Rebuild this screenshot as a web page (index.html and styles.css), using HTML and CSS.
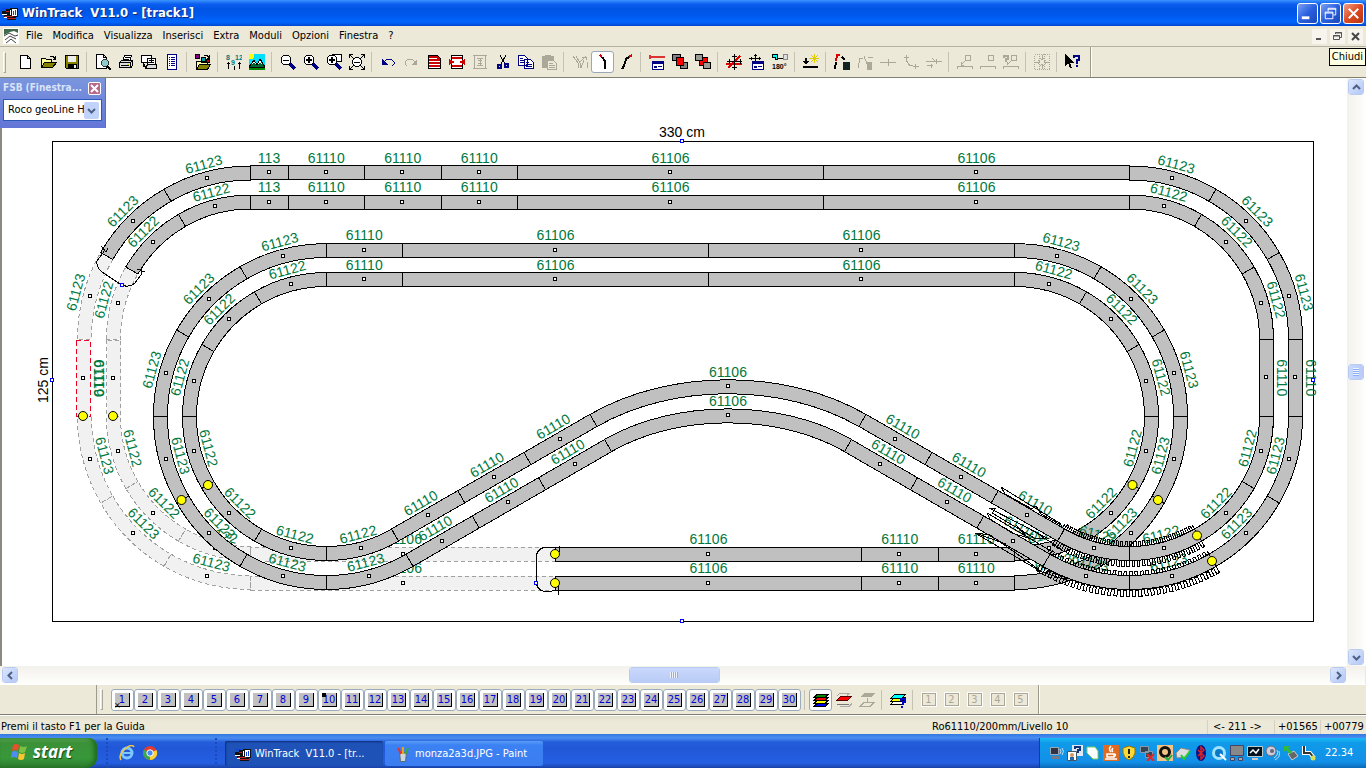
FILE: index.html
```html
<!DOCTYPE html>
<html lang="it">
<head>
    <meta charset="UTF-8">
    <meta name="viewport" content="width=device-width, initial-scale=1.0">
    <title>WinTrack V11.0 - [track1]</title>
    <link rel="stylesheet" href="styles.css">
</head>
<body>
    <svg class="defs" width="0" height="0">
        <symbol id="app" viewBox="0 0 16 16">
            <path fill="#111" d="M0 6h4V4h4V3h8v9h-2v3H5v-2H2v-3H0z"/>
            <path fill="#fff" d="M0 9h5v1H0zM8 5h1v5H8zM10 4h5v7h-5zM2 12h3v1H2z"/>
            <path fill="#1040e0" d="M11 6h1v4h-1zM13 5h1v5h-1zM0 3h6v1H0z"/>
            <path fill="#c02020" d="M3 11h8v1H3zM5 13h9v1H5zM4 6h3v1H4z"/>
        </symbol>
        <symbol id="page" viewBox="0 0 16 16"><path fill="#fff" stroke="#000" d="M2.500 1.500h7l3 3v10h-10zM9.500 1.500v3h3"/></symbol>
        <symbol id="folder" viewBox="0 0 16 16">
            <path fill="#ffff9c" stroke="#000" d="M.5 13.500v-9h4l1 1h5v3"/>
            <path fill="#848200" stroke="#000" d="M.5 13.500l3-5h12l-4 5z"/>
            <path fill="none" stroke="#000" d="M9 2.500h3l2 2M14.500 2v3h-3"/>
        </symbol>
        <symbol id="lens" viewBox="0 0 16 16">
            <path stroke="#000084" stroke-width="3" d="M10 10l5 5"/>
            <circle cx="6" cy="6" r="5" fill="#fff" stroke="#000"/>
        </symbol>
        <symbol id="win" viewBox="0 0 16 16"><path fill="#fff" stroke="#000084" d="M3.500 7.500h11v8h-11z"/><path fill="#000084" d="M4 8h10v2H4zM5 12h3v2H5zM9 12h4v1H9z"/></symbol>
        <symbol id="paint" viewBox="0 0 16 16">
            <path fill="#cdd6dd" stroke="#596a75" d="M4.500 6.500h7l-1 9h-5z"/>
            <path stroke="#d33" stroke-width="2" d="M6 8L3 2"/><path stroke="#f0a020" stroke-width="2" d="M8 8V1"/><path stroke="#3a3" stroke-width="2" d="M10 8l3-6"/>
        </symbol>
    </svg>

    <header class="title-bar">
        <svg class="icon"><use href="#app"/></svg>
        <h1>WinTrack&nbsp; V11.0 - [track1]</h1>
        <div class="window-buttons">
            <button aria-label="Riduci a icona"><svg viewBox="0 0 20 20"><path fill="#fff" d="M4 13h8v3H4z"/></svg></button>
            <button aria-label="Ripristina"><svg viewBox="0 0 20 20"><path fill="none" stroke="#fff" d="M7.500 8V4.500h8v7H13M7 5.500h9M4.500 8.500h8v7h-8zM4 9.500h9"/></svg></button>
            <button class="close" aria-label="Chiudi"><svg viewBox="0 0 20 20"><path stroke="#fff" stroke-width="2" d="M5 5l10 10M15 5L5 15"/></svg></button>
        </div>
    </header>

    <nav class="menu-bar">
        <svg class="icon" viewBox="0 0 16 16"><path fill="#fff" d="M0 0h16v16H0z"/><path fill="#3f6b4c" d="M1 1h14v4l-4-2-4 1-6 3z"/><path fill="none" stroke="#444" d="M1 8l5-3 6 3 3-1M2 12l5-4 6 3M3 15l5-4 5 4"/></svg>
        <button>File</button>
        <button>Modifica</button>
        <button>Visualizza</button>
        <button>Inserisci</button>
        <button>Extra</button>
        <button>Moduli</button>
        <button>Opzioni</button>
        <button>Finestra</button>
        <button>?</button>
        <div class="child-buttons">
            <button aria-label="Riduci"><svg viewBox="0 0 15 15"><path fill="#555" d="M4 9h5v2H4z"/></svg></button>
            <button aria-label="Ripristina finestra"><svg viewBox="0 0 15 15"><path fill="none" stroke="#555" d="M5.500 5V3.500h6v5H10M5 4h7M3.500 6.500h6v4h-6zM3 7h7"/></svg></button>
            <button aria-label="Chiudi finestra"><svg viewBox="0 0 15 15"><path stroke="#444" stroke-width="2" d="M4 4l7 7M11 4l-7 7"/></svg></button>
        </div>
        <span class="tooltip" role="tooltip">Chiudi</span>
    </nav>

    <div class="toolbar main-tools">
        <span class="grip"></span>
        <button aria-label="Nuovo"><svg><use href="#page"/></svg></button>
        <button aria-label="Apri"><svg><use href="#folder"/></svg></button>
        <button aria-label="Salva"><svg viewBox="0 0 16 16"><path fill="#848200" stroke="#000" d="M1.500 1.500h13v13h-12l-1-1z"/><path fill="#eee" d="M4 2h8v6H4z"/><path d="M4 10h9v5H4z"/><path fill="#eee" d="M10 11h2v3h-2z"/></svg></button>
        <i></i>
        <button aria-label="Anteprima"><svg viewBox="0 0 16 16"><path fill="#fff" stroke="#000" d="M1.500.5h7l3 3v11h-10zM8.500.5v3h3"/><circle cx="10" cy="9" r="3.500" fill="#8cc" stroke="#333"/><path stroke="#000" stroke-width="2" d="M12 12l4 4"/></svg></button>
        <button aria-label="Stampa"><svg viewBox="0 0 16 16"><path fill="#fff" stroke="#000" d="M4.500 7.500l2-6h7l-2 6z"/><path fill="#ddd" stroke="#000" d="M1.500 8.500l2-2h11l-2 2zM1.500 8.500h11v5h-11zM12.500 8.500l2-2v5l-2 3"/><path stroke="#000" d="M7 3.500h5M6 5.500h5M3 11.500h8"/><path fill="#dd0" d="M9 10h2v1H9z"/></svg></button>
        <button aria-label="Finestre"><svg viewBox="0 0 16 16"><path fill="#fff" stroke="#000" d="M.5 1.500h10v7H.5zM6.500 4.500h8v6h-8z"/><path fill="#ddd" stroke="#000" d="M4.500 14.500l2-4h9v4z"/><path stroke="#000" d="M2.500 9v3.500H5M8 6.500h5M8 8.500h5"/></svg></button>
        <button aria-label="Elenco"><svg viewBox="0 0 16 16"><path fill="#fff" stroke="#000084" d="M3.500.5h9v15h-9z"/><path stroke="#000084" d="M5 3.500h1M7 3.500h4M5 5.500h1M7 5.500h4M5 7.500h1M7 7.500h4M5 9.500h1M7 9.500h4M5 11.500h1M7 11.500h4"/></svg></button>
        <i></i>
        <button aria-label="Biblioteca"><svg viewBox="0 0 16 16"><path fill="#840084" stroke="#000" d="M.5.5h4v4h-4z"/><path fill="#00a0a0" stroke="#000" d="M6.500 3.500h4v4h-4z"/><path fill="#c00" stroke="#000" d="M11.500 5.500h3v3h-3z"/><path fill="#ffff9c" stroke="#000" d="M1.500 15.500v-8h4l1 1h6v2"/><path fill="#848200" stroke="#000" d="M1.500 15.500l3-5h11l-3 5z"/><path fill="none" stroke="#000" d="M9 1.500h3l2 2M14.500 1v3h-3"/></svg></button>
        <i></i>
        <button aria-label="Numeri"><svg viewBox="0 0 16 16"><text x="0" y="6">8</text><text x="5" y="11">9</text><text x="9" y="6">12</text><path fill="none" stroke="#000" d="M2.500 8v7M1 9.500h3M8.500 12v4M13.500 8v7M12 9.500h3"/></svg></button>
        <button aria-label="Paesaggio"><svg viewBox="0 0 16 16"><path fill="#00dfff" d="M0 0h16v16H0z"/><path fill="#ff0" d="M0 0h5v3L3 5H0z"/><path fill="#080" d="M0 12h16v4H0z"/><path fill="#063" stroke="#000" d="M0 13l5-7 3 5 3-6 5 8z"/><path fill="#fff" d="M5 7l2 3-2-1-2 1zM11 6l2 4-2-1-2 1z"/></svg></button>
        <i></i>
        <button aria-label="Riduci zoom"><svg viewBox="0 0 16 16"><use href="#lens"/><path stroke="#000" d="M3 6h6"/></svg></button>
        <button aria-label="Aumenta zoom"><svg viewBox="0 0 16 16"><use href="#lens"/><path stroke="#000" stroke-width="2" d="M3 6h6M6 3v6"/></svg></button>
        <button aria-label="Zoom area"><svg viewBox="0 0 16 16"><path fill="#fff" stroke="#000" d="M6.500.5h9v7h-9z"/><use href="#lens"/><path stroke="#000" stroke-width="2" d="M3 6h6M6 3v6"/></svg></button>
        <button aria-label="Zoom tutto"><svg viewBox="0 0 16 16"><circle cx="8" cy="8" r="4.500" fill="#fff" stroke="#000"/><path fill="none" stroke="#000" d="M5 8h6M.5 4V.5H4M.5.5l4 4M12 .5h3.500V4M15.500.5l-4 4M.5 12v3.500H4M.5 15.500l4-4M12 15.500h3.500V12M15.500 15.500l-4-4"/></svg></button>
        <i></i>
        <button aria-label="Annulla"><svg viewBox="0 0 16 16"><path fill="#000084" d="M2 5v6h6z"/><path fill="none" stroke="#000084" d="M4 8l3-3h4l3 3v2l-2 2"/></svg></button>
        <button aria-label="Ripeti"><svg viewBox="0 0 16 16"><path fill="#aca899" d="M14 5v6H8z"/><path fill="none" stroke="#aca899" d="M12 8L9 5H5L2 8v2l2 2"/></svg></button>
        <button aria-label="Lista pezzi"><svg viewBox="0 0 16 16"><path fill="#c00" stroke="#000" d="M2.500 1.500h9l3 3v10h-12z"/><path fill="#fff" d="M3 4h8v1H3zM3 7h11v1H3zM3 10h11v1H3zM3 13h11v1H3z"/></svg></button>
        <button aria-label="Elimina lista"><svg viewBox="0 0 16 16"><path fill="#fff" stroke="#000" d="M2.500 1.500h11v13h-11z"/><path fill="#c00" d="M3 3h10v2H3zM3 11h10v2H3zM0 5l6 3-6 3zM16 5l-6 3 6 3z"/></svg></button>
        <button disabled aria-label="Altezza"><svg viewBox="0 0 16 16"><path fill="none" stroke="#aca899" d="M2.500 1v14M13.500 1v14M1 1.500h14M1 14.500h14M5 4.500h6M5 11.500h6M8 5v6M6 6.500h4M6 9.500h4"/></svg></button>
        <button aria-label="Taglia"><svg viewBox="0 0 16 16"><path stroke="#000" d="M5 1l5 9M11 1L6 10"/><path fill="none" stroke="#000084" stroke-width="2" d="M3 11h3v3H3zM10 10h3v3h-3z"/></svg></button>
        <button aria-label="Copia"><svg viewBox="0 0 16 16"><path fill="#fff" stroke="#000084" d="M.5 1.500h6l3 3v7h-9zM6.500 5.500h6l3 3v6h-9z"/><path stroke="#000084" d="M2 4.500h3M2 6.500h4M2 8.500h4M8 8.500h3M8 10.500h6M8 12.500h6"/></svg></button>
        <button disabled aria-label="Incolla"><svg viewBox="0 0 16 16"><path fill="#aca899" d="M1 2h3V1h6v1h3v12H1z"/><path fill="#ece9d8" stroke="#aca899" d="M6.500 6.500h6l3 3v6h-9z"/><path stroke="#aca899" d="M8 9.500h4M8 11.500h6M8 13.500h6"/></svg></button>
        <i></i>
        <button disabled aria-label="Scambio"><svg viewBox="0 0 16 16"><path fill="none" stroke="#aca899" d="M1 2l5 7v5M4 2l4 7v5M14 2L8 8M10 3h4v3M15 8v6M12 6l-3 8"/></svg></button>
        <button class="pressed" aria-label="Curva"><svg viewBox="0 0 16 16"><path fill="none" stroke="#000" stroke-width="2" d="M7 3l3 4v8"/><path stroke="#d00" stroke-width="2" d="M5 1l2 2"/></svg></button>
        <button aria-label="Flessibile"><svg viewBox="0 0 16 16"><path fill="none" stroke="#000" stroke-width="2" d="M4 15l2-3 2-7 3-2"/><path stroke="#d00" stroke-width="2" d="M11 3l3-2"/></svg></button>
        <i></i>
        <button aria-label="Proprietà"><svg viewBox="0 0 16 16"><path stroke="#d33" stroke-width="2" d="M0 3h16M1 1v4"/><use href="#win"/></svg></button>
        <button aria-label="Porta avanti"><svg viewBox="0 0 16 16"><path fill="#848284" stroke="#000" d="M.5.500h8v6h-8zM8.500 8.500h7v6h-7z"/><path fill="red" stroke="#000" d="M4.500 3.500h7v8h-7z"/></svg></button>
        <button aria-label="Porta indietro"><svg viewBox="0 0 16 16"><path fill="red" stroke="#000" d="M4.500 3.500h8v8h-8z"/><path fill="#9c9a94" stroke="#000" d="M.5.500h7v6h-7zM8.500 8.500h7v6h-7z"/></svg></button>
        <i></i>
        <button aria-label="Sposta"><svg viewBox="0 0 16 16"><path stroke="#d00" stroke-width="2" d="M0 10h16M2 14L14 2"/><path fill="none" stroke="#000" d="M8.500 0v16M1 7.500h15M6 2.500h5M6 13.500h5M3 5v5M14 5v5"/></svg></button>
        <button aria-label="Sposta di"><svg viewBox="0 0 16 16"><path stroke="#000" d="M0 4.500h12M6.500 0v9M2 3v3M10 3v3M5 1.500h3"/><use href="#win"/></svg></button>
        <button aria-label="Ruota 180 gradi"><svg viewBox="0 0 16 16"><path fill="#0ff" stroke="#000" d="M.5.500h5v5h-2v-2h-3z"/><path fill="none" stroke="#000" d="M5 4.500h6"/><path fill="#ddd" stroke="#888" d="M11.500.5h4v5h-4z"/><text x="0" y="15" class="black">180°</text></svg></button>
        <i></i>
        <button aria-label="Collega"><svg viewBox="0 0 16 16"><path fill="none" stroke="#000" stroke-width="2" d="M3 4v6M0 13h15"/><path d="M0 7h6l-3 4z"/><path stroke="#dc0" d="M6 4.500h10M11.500 0v9M8 1l7 7M15 1L8 8"/></svg></button>
        <i></i>
        <button aria-label="Pendenza"><svg viewBox="0 0 16 16"><path fill="none" stroke="#d00" stroke-width="2" d="M6 1H3L2 7"/><path fill="none" stroke="#000" stroke-width="2" d="M2 8L1 15M8 3l3 3"/><path fill="#122" d="M9 8h7v8H9z"/></svg></button>
        <button disabled aria-label="Profilo"><svg viewBox="0 0 16 16"><path fill="none" stroke="#aca899" d="M1 14l2-10h3M7 2l3 8M11 3h5v3"/><path fill="#aca899" d="M10 8h5v8h-5z"/></svg></button>
        <button disabled aria-label="Dividi"><svg viewBox="0 0 16 16"><path stroke="#aca899" d="M0 8.500h16M8.500 5v7"/></svg></button>
        <button disabled aria-label="Unisci"><svg viewBox="0 0 16 16"><path fill="none" stroke="#aca899" d="M3.500 1v6l3 4h3M1 3.500h5M10 12.500h6M12.500 10v5"/></svg></button>
        <button disabled aria-label="Allinea"><svg viewBox="0 0 16 16"><path fill="none" stroke="#aca899" d="M0 7.500h16M6 4l4 4M10 5v5M1 11.500h6M5 10v4"/></svg></button>
        <i></i>
        <button disabled aria-label="Misura"><svg viewBox="0 0 16 16"><path fill="none" stroke="#aca899" d="M8.500 1.500h5v5h-5zM8 7l-4 4M4 8v3h3M.5 15v-2.500h15V15"/></svg></button>
        <button disabled aria-label="Misura base"><svg viewBox="0 0 16 16"><path fill="none" stroke="#aca899" d="M8.500 1.500h5v5h-5zM.5 15v-2.500h15V15"/></svg></button>
        <button disabled aria-label="Misura ignota"><svg viewBox="0 0 16 16"><path fill="none" stroke="#aca899" stroke-width="2" d="M1 4V2h4v3H3v3"/><path fill="none" stroke="#aca899" d="M8.500 1.500h5v5h-5zM8 7l-4 4v-3M.5 15v-2.500h15V15"/></svg></button>
        <i></i>
        <button disabled aria-label="Griglia"><svg viewBox="0 0 16 16"><path fill="none" stroke="#aca899" stroke-dasharray="1 1" d="M.5.500h15v15H.5zM5.500 0v16M10.500 0v16"/><path fill="none" stroke="#aca899" d="M8 1v5M8 10v5M1 8h5M10 8h5M6 4l2 2 2-2M6 12l2-2 2 2M4 6l2 2-2 2M12 6l-2 2 2 2"/></svg></button>
        <i></i>
        <button aria-label="Guida rapida"><svg viewBox="0 0 16 16"><path d="M0 0v12l3-3 2 5h2L5 9h4z"/><path fill="none" stroke="#000084" stroke-width="2" d="M9 4V2h5v4h-2v4M11 12h2"/></svg></button>
        <span class="toolbar-end"></span>
    </div>

    <main class="workspace">
        <svg class="plan" id="plan" role="img" aria-label="Tracciato 330 x 125 cm"></svg>
        <div class="scroll vertical">
            <button aria-label="Scorri su"><svg viewBox="0 0 9 9"><path d="M1 6l3.500-3.500L8 6"/></svg></button>
            <span class="thumb"></span>
            <button aria-label="Scorri giù"><svg viewBox="0 0 9 9"><path d="M1 3l3.500 3.500L8 3"/></svg></button>
        </div>
        <section class="palette">
            <h2>FSB (Finestra...</h2>
            <button aria-label="Chiudi FSB"><svg viewBox="0 0 11 11"><path stroke="#fff" stroke-width="2" d="M2 2l7 7M9 2L2 9"/></svg></button>
            <div class="combo">
                <select aria-label="Sistema di binari"><option>Roco geoLine H0</option></select>
                <span><svg viewBox="0 0 9 9"><path d="M1 3l3.500 3.500L8 3"/></svg></span>
            </div>
        </section>
    </main>
    <div class="scroll horizontal">
        <button aria-label="Scorri a sinistra"><svg viewBox="0 0 9 9"><path d="M6 1L2.500 4.500 6 8"/></svg></button>
        <span class="thumb"></span>
        <button aria-label="Scorri a destra"><svg viewBox="0 0 9 9"><path d="M3 1l3.500 3.500L3 8"/></svg></button>
    </div>

    <div class="toolbar level-tools">
        <span class="dock"></span>
        <span class="grip"></span>
        <button class="level hidden-mark"><b>1</b></button>
        <button class="level"><b>2</b></button>
        <button class="level"><b>3</b></button>
        <button class="level"><b>4</b></button>
        <button class="level"><b>5</b></button>
        <button class="level"><b>6</b></button>
        <button class="level"><b>7</b></button>
        <button class="level"><b>8</b></button>
        <button class="level"><b>9</b></button>
        <button class="level current"><b>10</b></button>
        <button class="level"><b>11</b></button>
        <button class="level"><b>12</b></button>
        <button class="level"><b>13</b></button>
        <button class="level"><b>14</b></button>
        <button class="level"><b>15</b></button>
        <button class="level"><b>16</b></button>
        <button class="level"><b>17</b></button>
        <button class="level"><b>18</b></button>
        <button class="level"><b>19</b></button>
        <button class="level"><b>20</b></button>
        <button class="level"><b>21</b></button>
        <button class="level"><b>22</b></button>
        <button class="level"><b>23</b></button>
        <button class="level"><b>24</b></button>
        <button class="level"><b>25</b></button>
        <button class="level"><b>26</b></button>
        <button class="level"><b>27</b></button>
        <button class="level"><b>28</b></button>
        <button class="level"><b>29</b></button>
        <button class="level"><b>30</b></button>
        <i></i>
        <button class="pressed" aria-label="Tutti i livelli"><svg viewBox="0 0 16 16"><path fill="#00f" stroke="#000" d="M1 14.500l3-3h11l-3 3z"/><path fill="#ff0" stroke="#000" d="M1 11.500l3-3h11l-3 3z"/><path fill="red" stroke="#000" d="M1 8.500l3-3h11l-3 3z"/><path fill="#080" stroke="#000" d="M1 5.500l3-3h11l-3 3z"/></svg></button>
        <button aria-label="Livello attivo"><svg viewBox="0 0 16 16"><path fill="none" stroke="#aaa" d="M1 3.500l3-2h9l-2 2M4 14.500h9l3-3"/><path fill="red" stroke="#500" d="M.5 8.500l4-4h11l-4 4z"/><path stroke="#777" d="M1 12.500h12"/></svg></button>
        <button disabled aria-label="Sposta livello"><svg viewBox="0 0 16 16"><path fill="#aca899" d="M1 5l4-4h11l-4 4z"/><path fill="none" stroke="#aca899" d="M8.500 6v4M1 14.500l4-4h10l-4 4z"/></svg></button>
        <i></i>
        <button aria-label="Info livelli"><svg viewBox="0 0 16 16"><path fill="#fff" stroke="#000" d="M.5 12.500l4-4h11l-4 4z"/><path fill="#ff0" stroke="#000" d="M.5 9.500l4-4h11l-4 4z"/><path fill="#0ff" stroke="#000" d="M.5 6.500l4-4h11l-4 4z"/><path fill="none" stroke="#00c" stroke-width="2" d="M11 9V7h4v3h-2v3M12 14v2"/></svg></button>
        <i></i>
        <button class="view" disabled><b>1</b></button>
        <button class="view" disabled><b>2</b></button>
        <button class="view" disabled><b>3</b></button>
        <button class="view" disabled><b>4</b></button>
        <button class="view" disabled><b>5</b></button>
        <span class="toolbar-end"></span>
    </div>

    <div class="status-bar">
        <span class="hint">Premi il tasto F1 per la Guida</span>
        <span class="piece">Ro61110/200mm/Livello 10</span>
        <span class="count">&lt;- 211 -&gt;</span>
        <span class="coord">+01565</span>
        <span class="coord">+00779</span>
    </div>

    <footer class="taskbar">
        <button class="start">
            <svg viewBox="0 0 20 20"><path fill="#e8502c" d="M3 3q3-2 6 0L8 9Q5 7 2 9z"/><path fill="#7cc242" d="M10 4q4 2 7 0l-2 6q-3 2-6 0z"/><path fill="#4f8df5" d="M2 10q3-2 6 0l-1 6q-3-2-6 0z"/><path fill="#fbc530" d="M9 11q3 2 6 0l-1 6q-3 2-6 0z"/></svg>
            start
        </button>
        <div class="quick">
            <a href="#" aria-label="Internet Explorer"><svg viewBox="0 0 16 16"><circle cx="8" cy="8" r="5" fill="none" stroke="#7cc8ff" stroke-width="3"/><path stroke="#7cc8ff" stroke-width="2" d="M4 8h9"/><path fill="none" stroke="#f5c542" stroke-width="1.500" d="M2 15Q-1 10 6 4t9-2"/></svg></a>
            <a href="#" aria-label="Chrome"><svg viewBox="0 0 16 16"><circle cx="8" cy="8" r="7" fill="#e33b2e"/><path fill="#fbd22e" d="M8 8l6.500-3A7 7 0 0 1 8 15z"/><path fill="#3aa757" d="M8 8v7A7 7 0 0 1 2 4.500z"/><circle cx="8" cy="8" r="3.200" fill="#4a8af4" stroke="#fff"/></svg></a>
        </div>
        <button class="task active"><svg><use href="#app"/></svg>WinTrack&nbsp; V11.0 - [tr...</button>
        <button class="task"><svg><use href="#paint"/></svg>monza2a3d.JPG - Paint</button>
        <div class="tray">
            <svg viewBox="0 0 16 16"><path fill="#334" stroke="#9ab" d="M1.500 2.500h8v7h-8z"/><path fill="#778" d="M2 11h9v3H2z"/><path fill="none" stroke="#cde" d="M11 4q2 2 0 5M13 3q3 3 0 7"/></svg>
            <svg viewBox="0 0 16 16"><path fill="#dfe8f2" d="M5 0h11v11H5z"/><path fill="#fff" stroke="#456" d="M.5 6.500h9v9h-9z"/><path fill="none" stroke="#137" stroke-width="2" d="M8 4V2h5v3h-2v3"/><path fill="#26a" d="M3 12h4v3H3z"/><circle cx="5" cy="10" r="2" fill="#c96"/></svg>
            <svg viewBox="0 0 16 16"><path fill="#fff" stroke="#7c6" d="M2 2h8l3 4v8H8L2 8z"/></svg>
            <svg viewBox="0 0 16 16"><path fill="#e06a20" d="M0 0h16v16H0z"/><path fill="none" stroke="#fff" stroke-width="1.500" d="M8 1q-3 3 0 6M10 3q-2 2 0 4M4 9h7v3H4zM11 9q3 0 0 3M2 14h12"/></svg>
            <svg viewBox="0 0 16 16"><path fill="#fbd93a" stroke="#987200" d="M8 1l6 2v5q-1 5-6 7-5-2-6-7V3z"/><path fill="#222" d="M7 4h2v5H7zM7 11h2v2H7z"/></svg>
            <svg viewBox="0 0 16 16"><path fill="#345" stroke="#89a" d="M1.500 1.500h8v6h-8zM6.500 6.500h7v6h-7z"/><path stroke="#e22" stroke-width="2" d="M8 9l7 7M15 9l-7 7"/></svg>
            <svg viewBox="0 0 16 16"><path fill="#f3c385" d="M0 0h16v16H0z"/><circle cx="8" cy="7" r="4.500" fill="none" stroke="#111" stroke-width="3"/><path fill="none" stroke="#2a4" stroke-width="2" d="M8 12l3 3 4-5"/></svg>
            <svg viewBox="0 0 16 16"><path fill="#ddd" stroke="#888" d="M1 8l5-5 9 2-4 7-9 1z"/><path fill="none" stroke="#2c3" stroke-width="2" d="M6 10l3 4 6-8"/></svg>
            <svg viewBox="0 0 16 16"><ellipse cx="8" cy="8" rx="5" ry="8" fill="#00148c"/><path fill="none" stroke="#d22" stroke-width="1.500" d="M5 5l6 6-3 3V2l3 3-6 6"/></svg>
            <svg viewBox="0 0 16 16"><circle cx="8" cy="8" r="5.500" fill="#0a78c8" stroke="#9ee4ff" stroke-width="3"/><path stroke="#fff" stroke-width="2" d="M9 9l6 6"/></svg>
            <svg viewBox="0 0 16 16"><path fill="#888" stroke="#446" d="M1.500.5h13v10h-13z"/><path fill="#aaa" stroke="#446" d="M1.500 12.500h4v3h-4zM9.500 12.500h4v3h-4z"/></svg>
            <svg viewBox="0 0 16 16"><path fill="#012" stroke="#bcc" d="M.5 1.500h15v10H.5z"/><path fill="none" stroke="#fff" stroke-width="1.500" d="M3 8l3-3 3 3 3-4"/><path fill="#ccc" d="M5 13h6v2H5z"/></svg>
            <svg viewBox="0 0 16 16"><circle cx="6" cy="6" r="5" fill="#ccd" stroke="#667"/><circle cx="7" cy="6" r="2" fill="#667"/><path fill="none" stroke="#bde" d="M12 5q2 5-3 8M14 6q2 6-4 9"/></svg>
            <svg viewBox="0 0 16 16"><path fill="#666" stroke="#ccc" d="M5 9l6-3 4 5-6 4z"/><path fill="#3b3" d="M1 1h6L5 3l4 4-2 2-4-4-2 2z"/></svg>
            <svg viewBox="0 0 16 16"><path fill="none" stroke="#fff" stroke-width="4" d="M3 1v7h6l4 5"/><path fill="none" stroke="#333" stroke-width="2" d="M3 1v7h6l4 5"/><circle cx="12" cy="13" r="2.500" fill="#dd5"/></svg>
            <time>22.34</time>
        </div>
    </footer>

    <script src="plan.js"></script>
</body>
</html>
```

FILE: styles.css
```css
* {
    box-sizing: border-box;
}
body {
    margin: 0;
    height: 100vh;
    display: flex;
    flex-direction: column;
    overflow: hidden;
    background: #ece9d8;
    color: #000;
    font-family: Tahoma, "DejaVu Sans Condensed", "Noto Sans", sans-serif;
    font-size: 11px;
    line-height: 14px;
}
button, select {
    font: inherit;
    color: inherit;
    border: 0;
    background: none;
    padding: 0;
    margin: 0;
}
h1, h2 {
    margin: 0;
}
svg {
    display: block;
    flex: none;
}
.defs {
    position: absolute;
}
.icon {
    width: 16px;
    height: 16px;
}

/* title bar */
.title-bar {
    height: 26px;
    flex: none;
    display: flex;
    align-items: center;
    gap: 4px;
    padding: 0 2px;
    background: linear-gradient(#3c94fe 0, #0c5ef0 4px, #0054e3 9px, #0058ec 15px, #0066fe 22px, #0048d0 26px);
    color: #fff;
}
.title-bar h1 {
    flex: 1;
    font-size: 13px;
    line-height: 18px;
    text-shadow: 1px 1px #0a2a80;
}
.window-buttons {
    display: flex;
    gap: 2px;
}
.window-buttons button {
    width: 21px;
    height: 21px;
    border: 1px solid #fff;
    border-radius: 3px;
    background: linear-gradient(135deg, #7ba2f5, #2a5fe0 50%, #1c48b8);
}
.window-buttons .close {
    background: linear-gradient(135deg, #f0a088, #dd4a22 50%, #b8330e);
}

/* menu */
.menu-bar {
    position: relative;
    height: 20px;
    flex: none;
    display: flex;
    align-items: center;
    padding: 0 3px;
}
.menu-bar > .icon {
    margin-right: 2px;
}
.menu-bar > button {
    padding: 0 5px;
}
.child-buttons {
    display: flex;
    gap: 3px;
    margin-left: auto;
}
.child-buttons button {
    width: 15px;
    height: 15px;
    background: #f6f4ec;
}
.tooltip {
    position: absolute;
    z-index: 5;
    right: 0;
    top: 22px;
    padding: 1px 2px;
    border: 1px solid #000;
    background: #ffffe1;
}

/* toolbars */
.toolbar {
    flex: none;
    display: flex;
    align-items: center;
    border-top: 1px solid #fff;
    border-bottom: 1px solid #808070;
}
.toolbar button {
    width: 23px;
    height: 22px;
    flex: none;
    display: flex;
    align-items: center;
    justify-content: center;
}
.toolbar button svg {
    width: 16px;
    height: 16px;
    shape-rendering: crispEdges;
}
.toolbar text {
    font-family: "Liberation Sans", Arial, sans-serif;
    font-size: 7px;
    font-weight: bold;
    fill: #007878;
}
.toolbar text.black {
    fill: #000;
}
.toolbar i {
    width: 1px;
    height: 20px;
    flex: none;
    margin: 0 4px 0 3px;
    background: #c5c2b4;
}
.toolbar .pressed {
    border: 1px solid #98a8b8;
    border-radius: 3px;
    background: #fff;
}
.grip {
    width: 3px;
    height: 21px;
    flex: none;
    border: 1px solid #fff;
    border-right-color: #aca899;
    border-bottom-color: #aca899;
}
.toolbar-end {
    align-self: stretch;
    width: 2px;
    margin-left: 6px;
    border-left: 1px solid #9c9a8c;
    background: #fff;
}
.main-tools {
    height: 32px;
    border-top-color: #b5b2a3;
}
.main-tools .grip {
    margin: 0 8px 0 3px;
}

/* drawing area */
.workspace {
    position: relative;
    flex: 1;
    min-height: 0;
    display: flex;
    border-left: 2px solid #8c8a80;
    background: #fff;
}
.plan {
    flex: 1;
    min-width: 0;
    height: 100%;
}
.plan text {
    font-family: "Liberation Sans", Arial, sans-serif;
    font-size: 14px;
    text-anchor: middle;
    fill: #00783c;
}
.plan .dimension {
    fill: #000;
}
.plan path, .plan rect {
    shape-rendering: crispEdges;
}
.rail {
    fill: #c0c0c0;
    stroke: #000;
}
.ghost {
    fill: #f1f1f1;
    stroke: #a0a0a0;
    stroke-dasharray: 4 3;
}
.selected {
    fill: #f1f1f1;
    stroke: #f00020;
    stroke-dasharray: 5 3;
}
.line {
    fill: none;
    stroke: #000;
}
.dot {
    fill: #fff;
    stroke: #000;
}
.signal {
    fill: #ff0;
    stroke: #000;
}
.handle {
    fill: #fff;
    stroke: #00f;
}
.palette {
    position: absolute;
    left: -2px;
    top: 0;
    width: 106px;
    height: 50px;
    display: grid;
    grid-template-columns: minmax(0, 1fr) 14px;
    grid-template-rows: 14px 24px;
    gap: 3px 1px;
    align-items: center;
    padding: 3px;
    background: linear-gradient(#7b96de, #6375d6);
    border-right: 1px solid #5a6cc8;
}
.palette h2 {
    color: #d8e4f8;
    font-size: 10px;
    line-height: 14px;
    white-space: nowrap;
}
.palette > button {
    width: 13px;
    height: 13px;
    border: 1px solid #fff;
    border-radius: 2px;
    background: #b8688c;
}
.combo {
    grid-column: 1 / 3;
    height: 22px;
    display: flex;
    align-items: center;
    padding: 2px;
    border: 1px solid #2858b8;
    background: #fff;
}
.combo select {
    flex: 1;
    min-width: 0;
    appearance: none;
    padding: 0 0 0 2px;
    overflow: hidden;
    white-space: nowrap;
}
.combo span {
    width: 15px;
    height: 17px;
    flex: none;
    display: flex;
    align-items: center;
    justify-content: center;
    background: #c1d3fb;
    border-radius: 2px;
}

/* scroll bars */
.scroll {
    display: flex;
    align-items: center;
    flex: none;
    background: linear-gradient(90deg, #f3f1ec, #fefefb);
}
.vertical {
    width: 18px;
    flex-direction: column;
    justify-content: space-between;
    padding: 1px 0;
    margin-right: 1px;
}
.horizontal {
    height: 18px;
    justify-content: space-between;
    padding: 0 19px 0 2px;
    background: linear-gradient(#f3f1ec, #fefefb);
    border-right: 1px solid #ece9d8;
}
.scroll button, .thumb {
    width: 16px;
    height: 16px;
    display: flex;
    align-items: center;
    justify-content: center;
    border: 1px solid #fff;
    border-radius: 3px;
    outline: 1px solid #b8cbf0;
    outline-offset: -1px;
    background: linear-gradient(135deg, #dce6fe, #b4c8f6);
}
.scroll svg, .combo svg {
    width: 9px;
    height: 9px;
    fill: none;
    stroke: #4d6185;
    stroke-width: 2;
}
.horizontal .thumb {
    width: 91px;
    background: repeating-linear-gradient(90deg, #eef4fe 0 1px, #8cb0f8 1px 2px) center / 8px 6px no-repeat, linear-gradient(#c9d8fc, #b9cbf6);
}
.vertical .thumb {
    background: repeating-linear-gradient(#eef4fe 0 1px, #8cb0f8 1px 2px) center / 6px 8px no-repeat, linear-gradient(90deg, #c9d8fc, #b9cbf6);
}

/* levels */
.level-tools {
    height: 31px;
}
.level-tools .dock {
    align-self: stretch;
    width: 97px;
    border-right: 1px solid #9c9a8c;
}
.level-tools .grip {
    margin: 0 8px 0 3px;
}
.toolbar .level {
    position: relative;
    border: 1px solid #9aacbc;
    border-radius: 3px;
    background: #fff;
}
.level b {
    width: 15px;
    height: 14px;
    line-height: 13px;
    font-weight: normal;
    background: #c0c0c0;
    color: #0000d8;
    border-right: 1px solid #000;
    border-bottom: 1px solid #000;
}
.current::before {
    content: "";
    position: absolute;
    left: 3px;
    top: 3px;
    width: 4px;
    height: 4px;
    background: #000;
}
.hidden-mark::before {
    content: "×";
    position: absolute;
    left: 2px;
    bottom: 0;
    line-height: 10px;
    font-size: 9px;
}
.view b {
    width: 14px;
    height: 13px;
    line-height: 11px;
    font-weight: normal;
    color: #aca899;
    border: 1px solid #aca899;
    outline: 1px solid #fff;
}

/* status bar */
.status-bar {
    height: 19px;
    flex: none;
    display: flex;
    align-items: center;
    padding: 3px 0 0 1px;
    border-top: 1px solid #fff;
    background: linear-gradient(#dfdccb, #ece9d8 5px);
}
.hint {
    flex: 1;
}
.piece {
    width: 275px;
}
.count {
    width: 67px;
    padding-left: 5px;
    border-left: 1px solid #d5d2c4;
}
.coord {
    width: 46px;
    padding-left: 3px;
    border-left: 1px solid #d5d2c4;
}

/* taskbar */
.taskbar {
    height: 34px;
    flex: none;
    display: flex;
    align-items: stretch;
    color: #fff;
    background: linear-gradient(#3078e0 0, #4a8ef0 4px, #245edb 8px, #2157d7 14px, #245fe2 29px, #1941a5 34px);
}
.start {
    width: 97px;
    margin-top: 4px;
    display: flex;
    align-items: center;
    gap: 3px;
    padding: 0 0 2px 10px;
    border-radius: 0 8px 10px 0;
    background: linear-gradient(#5eac56, #3c9138 5px, #37983a 20px, #2c7a2c);
    box-shadow: inset -3px 0 4px #1f6a20;
    color: #fff;
    font-family: "Open Sans", sans-serif;
    font-size: 17px;
    font-style: italic;
    font-weight: bold;
    text-shadow: 1px 1px 1px #154a15;
}
.start svg {
    width: 20px;
    height: 20px;
}
.quick {
    width: 111px;
    display: flex;
    align-items: center;
    gap: 7px;
    margin: 4px 8px 0 9px;
    padding-left: 11px;
    border: dotted #1a4bb8;
    border-width: 0 2px;
}
.quick svg, .task svg, .tray svg {
    width: 16px;
    height: 16px;
}
.task {
    width: 158px;
    height: 25px;
    margin: 7px 2px 0 0;
    display: flex;
    align-items: center;
    gap: 4px;
    padding-left: 10px;
    border-radius: 2px;
    background: linear-gradient(#5a9cf8, #3c81f3 4px, #3a7df0);
    color: #fff;
    white-space: nowrap;
}
.task.active {
    background: #1e52b7;
    box-shadow: inset 1px 1px 2px #0e2f78;
}
.tray {
    margin: 4px 0 0 auto;
    width: 327px;
    display: flex;
    align-items: center;
    gap: 2px;
    padding-left: 9px;
    border-left: 1px solid #0a3c9c;
    background: linear-gradient(#18bbf5 0, #0f9ae9 5px, #1290e8 24px, #0c68b8);
}
.tray time {
    margin-left: 6px;
}
```

FILE: plan.js
```js
// Draws the track plan. Coordinates are window pixels, angles are degrees (0 = right, 90 = down).
const plan = document.getElementById("plan");
const NS = "http://www.w3.org/2000/svg";
const HALF = 7;   // half width of a track
const R2 = 137;   // 61122
const R3 = 166;   // 61123

const root = add(plan, "g", { transform: "translate(-2,-78)" });

function add(parent, name, attrs, text) {
    const el = document.createElementNS(NS, name);
    for (const key in attrs) el.setAttribute(key, attrs[key]);
    if (text) el.textContent = text;
    parent.appendChild(el);
    return el;
}

function polar(cx, cy, r, a) {
    const t = a * Math.PI / 180;
    return [cx + r * Math.cos(t), cy + r * Math.sin(t)];
}

function path(d, cls) {
    add(root, "path", { d: d, class: cls });
}

function label(x, y, angle, text) {
    while (angle > 90) angle -= 180;
    while (angle < -90) angle += 180;
    add(root, "text", { transform: `translate(${x},${y}) rotate(${angle})`, y: -10 }, text);
}

function dot(x, y, cls) {
    add(root, "rect", { x: Math.floor(x) - 1.5, y: Math.floor(y) - 1.5, width: 3, height: 3, class: cls || "dot" });
}

function straight(x1, y1, x2, y2, text, cls, side) {
    const a = Math.atan2(y2 - y1, x2 - x1);
    const nx = -Math.sin(a) * HALF;
    const ny = Math.cos(a) * HALF;
    path(`M${x1 + nx} ${y1 + ny}L${x2 + nx} ${y2 + ny}L${x2 - nx} ${y2 - ny}L${x1 - nx} ${y1 - ny}Z`, cls || "rail");
    const mx = (x1 + x2) / 2;
    const my = (y1 + y2) / 2;
    dot(mx, my);
    label(mx, my, side || a * 180 / Math.PI, text);
}

// a row of straights starting at x, one length per piece
function row(x, y, pieces, cls) {
    for (const [len, text] of pieces) {
        straight(x, y, x + len, y, text, cls);
        x += len;
    }
}

function curve(cx, cy, r, from, text, cls) {
    const to = from + 30;
    const o = r + HALF;
    const i = r - HALF;
    path(`M${polar(cx, cy, o, from)}A${o} ${o} 0 0 1 ${polar(cx, cy, o, to)}L${polar(cx, cy, i, to)}A${i} ${i} 0 0 0 ${polar(cx, cy, i, from)}Z`, cls || "rail");
    const [mx, my] = polar(cx, cy, r, from + 15);
    dot(mx, my);
    label(mx, my, from + 105, text);
}

function pair(cx, cy, angles, cls) {
    for (const a of angles) {
        curve(cx, cy, R3, a, "61123", cls);
        curve(cx, cy, R2, a, "61122", cls);
    }
}

// three straights climbing at 30 degrees
function ramp(x, y, dir) {
    for (let n = 0; n < 3; n++) {
        const x2 = x + dir * 66.25;
        const y2 = y - 38.25;
        straight(x, y, x2, y2, "61110");
        x = x2;
        y = y2;
    }
}

// flexible track over the hill
function hill(x1, x2, y, len) {
    const c = Math.cos(Math.PI / 6);
    const edge = (k, rev) => {
        const a = [x1 - k / 2, y - k * c];
        const b = [x2 + k / 2, y - k * c];
        const l = len + k * 0.35;
        const p = [a, [a[0] + l * c, a[1] - l / 2], [b[0] - l * c, b[1] - l / 2], b];
        if (rev) p.reverse();
        return `${p[0]}C${p[1]} ${p[2]} ${p[3]}`;
    };
    path(`M${edge(HALF)}L${edge(-HALF, true)}Z`, "rail");
    const crest = y - len * 0.375;
    dot((x1 + x2) / 2, crest);
    label((x1 + x2) / 2, crest, 0, "61106");
}

// bridge railing along a curve
function railing(cx, cy, r1, r2) {
    let d = "";
    for (let a = 60; a <= 120; a += 2) {
        d += `${d ? "L" : "M"}${polar(cx, cy, r1, a)}L${polar(cx, cy, r2, a)}L${polar(cx, cy, r2, a + 1)}L${polar(cx, cy, r1, a + 1)}`;
    }
    path(d, "line");
}

// board
add(root, "rect", { x: 52.5, y: 141.5, width: 1261, height: 480, class: "line" });
add(root, "text", { x: 682, y: 137, class: "dimension" }, "330 cm");
add(root, "text", { transform: "translate(48,380) rotate(-90)", class: "dimension" }, "125 cm");

// hidden part on the left
pair(250.5, 339, [180], "ghost");
pair(250.5, 416.5, [90, 120, 150], "ghost");
straight(113.5, 340, 113.5, 416, "61110", "ghost", -90);
straight(83.5, 340.5, 83.5, 416.5, "61110", "selected", 90);
row(250.5, 554, [[305, "61106"]], "ghost");
row(250.5, 583, [[305, "61106"]], "ghost");

// lower level
const station = [[306, "61106"], [76.5, "61110"], [76.5, "61110"]];
row(555.5, 554, station);
row(555.5, 583, station);
pair(1014.5, 416.5, [60, 30, 0]);

// outer loop
const outer = [[38, "113"], [76.5, "61110"], [76.5, "61110"], [76.5, "61110"], [306, "61106"], [306, "61106"]];
row(250, 172.5, outer);
row(250, 202, outer);
pair(250.5, 339, [210, 240]);
pair(1129.5, 339, [270, 300, 330]);
straight(1266.5, 339.5, 1266.5, 416, "61110", "rail", 90);
straight(1295.5, 339.5, 1295.5, 416, "61110", "rail", 90);
pair(1129.5, 416.5, [0, 30, 60, 90]);

// inner loop
const inner = [[76.5, "61110"], [306, "61106"], [306, "61106"]];
row(326, 250, inner);
row(326, 279.5, inner);
pair(326.5, 416.5, [180, 210, 240, 150, 120, 90, 60]);
pair(1014.5, 416.5, [270, 300, 330]);

ramp(409.5, 560.25, 1);
ramp(395, 535, 1);
ramp(1046.5, 560.25, -1);
ramp(1061, 535, -1);
hill(593.5, 862.5, 420.5, 90);
hill(608, 848, 445.5, 79);

// bridge
railing(1129.5, 416.5, 125, 130);
railing(1129.5, 416.5, 144, 150);
railing(1129.5, 416.5, 155, 159);
railing(1129.5, 416.5, 174, 180);
path("M1001 487l4 7 27 15 4-3 5 8 20 11 3 5M1001 487l60 37M989 508h7l-4 5 44 26 8-1-10-7 28 19M989 508l60 31", "line");
path("M987 513l3 6 22 14 16 5-12-13M987 513l64 38M1006 544l-31-11 15 2 40 28 12 9 27 9M975 533l65 38", "line");

// tunnel portals
path("M559 546v6M559 548l-12-1q-11 1-11 12v21q0 11 11 12l10-2M558 586v9", "line");
path("M101 246l5 6 2-4M105 250l-8 11q-1 6 5 11l18 12q8 5 15-1l6-8 1-7M137 269l8 3", "line");

// signals
for (const [x, y] of [[83, 416], [113, 416], [181.5, 500], [208, 485], [555, 554], [555, 583],
    [1132.5, 485], [1158, 500], [1197, 535.5], [1212, 561]]) {
    add(root, "circle", { cx: x, cy: y, r: 4.5, class: "signal" });
}

for (const [x, y] of [[682, 141], [682, 621], [52, 380], [1313, 380], [122, 285], [536, 583]]) {
    dot(x, y, "handle");
}
```
